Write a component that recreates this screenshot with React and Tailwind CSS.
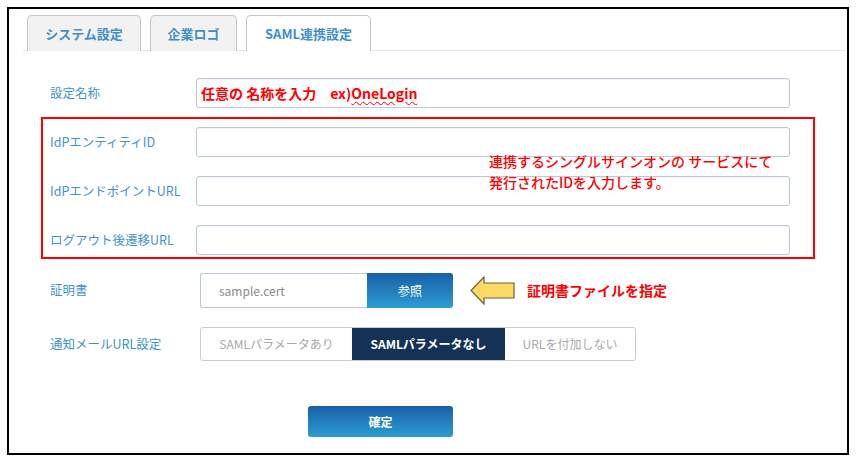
import React from 'react';

const font = { fontFamily: '"Noto Sans CJK JP", "Noto Sans", sans-serif' };

const labelCls = 'w-[146px] shrink-0 text-[12.5px] text-[#3f93cc]';
const inputCls =
  'h-[30px] w-[594px] rounded-[3px] border border-[#b9c9d8] bg-white shadow-[inset_0_1px_1px_rgba(0,0,0,0.05)]';

const Arrow = () => (
  <svg width="46" height="30" viewBox="0 0 46 30">
    <polygon
      points="1,14.5 14,1 14,7 44,7 44,22 14,22 14,28"
      fill="#ffd966"
      stroke="#6b6140"
      strokeWidth="1.2"
      strokeLinejoin="miter"
    />
  </svg>
);

const Tab = ({ label, active, width }) => (
  <div
    className={`-mb-px flex h-[36px] items-center justify-center rounded-t-[5px] border border-b-0 border-[#c6c6c6] text-[13px] font-bold text-[#3f8fc8] ${
      active ? 'bg-white' : 'bg-[#f2f2f2]'
    } ${width}`}
  >
    {label}
  </div>
);

export default function App() {
  return (
    <div className="min-h-[463px] bg-white pl-[7px] pt-[7px]" style={font}>
      <div className="h-[448px] w-[842px] border-2 border-black">
        {/* tabs */}
        <div className="ml-[14px] mt-[6px] flex gap-[9px] border-b border-[#e2e8ec] pl-[4px]">
          <Tab label="システム設定" width="w-[114px]" />
          <Tab label="企業ロゴ" width="w-[87px]" />
          <Tab label="SAML連携設定" width="w-[125px]" active />
        </div>

        <div className="pl-[32px]">
          {/* 設定名称 */}
          <div className="mt-[27px] flex items-center pl-[9px]">
            <div className={labelCls}>設定名称</div>
            <div className={`${inputCls} flex items-center pl-[4px]`}>
              <span className="text-[14px] font-bold text-[#ff0000]">
                任意の 名称を入力　ex)
                <span className="underline decoration-wavy decoration-[#ff0000] decoration-1 underline-offset-2">
                  OneLogin
                </span>
              </span>
            </div>
          </div>

          {/* IdP block */}
          <div className="relative mt-[9px] flex w-[774px] flex-col gap-[19px] border-2 border-[#ff0000] pb-[2px] pl-[7px] pt-[8px]">
            <div className="flex items-center">
              <div className={labelCls}>IdPエンティティID</div>
              <div className={inputCls} />
            </div>
            <div className="flex items-center">
              <div className={labelCls}>IdPエンドポイントURL</div>
              <div className={inputCls} />
            </div>
            <div className="flex items-center">
              <div className={labelCls}>ログアウト後遷移URL</div>
              <div className={inputCls} />
            </div>
            <div className="absolute left-[446px] top-[32px] text-[14px] font-medium leading-[21px] text-[#ff0000]">
              連携するシングルサインオンの サービスにて
              <br />
              発行されたIDを入力します。
            </div>
          </div>

          {/* 証明書 */}
          <div className="mt-[14px] flex items-center pl-[9px]">
            <div className="w-[150px] shrink-0 text-[12.5px] text-[#3f93cc]">証明書</div>
            <div className="flex h-[35px]">
              <div className="flex w-[167px] items-center rounded-l-[3px] border border-r-0 border-[#b9c9d8] pl-[18px] text-[12px] text-[#8a8a8a]">
                sample.cert
              </div>
              <div className="flex w-[86px] items-center justify-center rounded-r-[3px] bg-gradient-to-b from-[#1a60a6] to-[#2c9ed2] text-[12px] text-white">
                参照
              </div>
            </div>
            <div className="ml-[17px] flex items-center">
              <Arrow />
            </div>
            <div className="ml-[11px] text-[14px] font-bold text-[#ff0000]">証明書ファイルを指定</div>
          </div>

          {/* 通知メールURL設定 */}
          <div className="mt-[19px] flex items-center pl-[9px]">
            <div className="w-[150px] shrink-0 text-[12.5px] text-[#3f93cc]">通知メールURL設定</div>
            <div className="flex h-[34px] overflow-hidden rounded-[3px] border border-[#c3cbd3] text-[12px]">
              <div className="flex w-[151px] items-center justify-center text-[#a9a9a9]">SAMLパラメータあり</div>
              <div className="flex w-[153px] items-center justify-center bg-[#143256] font-bold text-white">
                SAMLパラメータなし
              </div>
              <div className="flex w-[130px] items-center justify-center text-[#a9a9a9]">URLを付加しない</div>
            </div>
          </div>

          {/* 確定 */}
          <div className="ml-[267px] mt-[45px] flex h-[31px] w-[145px] items-center justify-center rounded-[3px] bg-gradient-to-b from-[#1a60a6] to-[#2c9ed2] text-[12px] font-bold text-white">
            確定
          </div>
        </div>
      </div>
    </div>
  );
}
